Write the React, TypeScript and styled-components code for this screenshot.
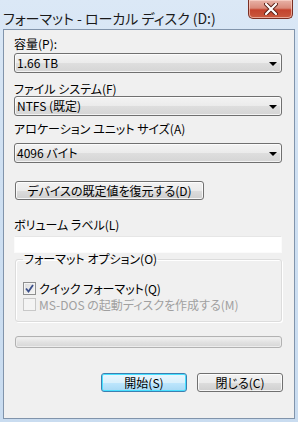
import React from "react";
import styled, { createGlobalStyle } from "styled-components";

const Global = createGlobalStyle`
  html, body { margin: 0; padding: 0; background: #cfe0f2; }
  body { font-family: "Noto Sans CJK JP", "Noto Sans", sans-serif; }
  * { box-sizing: border-box; }
`;

const Frame = styled.div`
  width: 298px;
  height: 422px;
  background: linear-gradient(180deg, #dbe8f6 0%, #cfe0f2 40%, #c9dcf0 100%);
  display: flex;
  flex-direction: column;
  overflow: hidden;
`;

const TitleBar = styled.div`
  height: 29px;
  display: flex;
  align-items: flex-start;
  justify-content: space-between;
  padding-left: 3px;
`;

const Title = styled.div`
  font-family: "Noto Sans CJK JP", sans-serif;
  font-feature-settings: "palt" 1;
  font-size: 14px;
  line-height: 18px;
  margin-top: 9px;
  color: #1a1a1a;
`;

const CloseButton = styled.div`
  width: 45px;
  height: 19px;
  margin-right: 5px;
  border: 1px solid #7a2f23;
  border-top: none;
  border-radius: 0 0 5px 5px;
  background: linear-gradient(180deg, #e8b3a8 0%, #d98a7a 45%, #c4432d 55%, #c95a3f 100%);
  box-shadow: inset 0 0 0 1px rgba(255, 220, 210, 0.6);
  display: flex;
  align-items: center;
  justify-content: center;
`;

const Client = styled.div`
  flex: 1;
  margin: 0 3px 3px 3px;
  border: 1px solid #8194ab;
  background: #f0f0f0;
  padding: 7px 12px 0 10px;
  display: flex;
  flex-direction: column;
  font-family: "Noto Sans CJK JP", sans-serif;
  font-feature-settings: "palt" 1;
  font-size: 12px;
  color: #000;
`;

const Label = styled.div<{ $mt: number }>`
  line-height: 14px;
  height: 14px;
  margin-top: ${(p) => p.$mt}px;
  white-space: nowrap;
`;

const Combo = styled.div<{ $mt: number }>`
  height: 20px;
  margin-top: ${(p) => p.$mt}px;
  border: 1px solid #707070;
  border-radius: 3px;
  background: linear-gradient(180deg, #f3f3f3 0%, #ebebeb 50%, #dedede 51%, #d5d5d5 100%);
  box-shadow: inset 0 0 0 1px rgba(255, 255, 255, 0.7);
  display: flex;
  align-items: center;
  justify-content: space-between;
  padding: 0 4px 0 2px;
  line-height: 16px;
`;

const Arrow = styled.span`
  width: 0;
  height: 0;
  border-left: 4px solid transparent;
  border-right: 4px solid transparent;
  border-top: 4px solid #000;
  margin-top: 2px;
`;

const Button = styled.div<{ $default?: boolean; $w: number }>`
  width: ${(p) => p.$w}px;
  height: 19px;
  border: 1px solid ${(p) => (p.$default ? "#3c7fb1" : "#707070")};
  border-radius: 3px;
  background: ${(p) =>
    p.$default
      ? "linear-gradient(180deg, #eaf6fd 0%, #d9f0fc 50%, #bee6fd 51%, #a7d9f5 100%)"
      : "linear-gradient(180deg, #f2f2f2 0%, #ebebeb 50%, #dddddd 51%, #cfcfcf 100%)"};
  box-shadow: inset 0 0 0 1px ${(p) => (p.$default ? "#48e0ff" : "rgba(255,255,255,0.8)")};
  display: flex;
  align-items: center;
  justify-content: center;
  line-height: 16px;
  white-space: nowrap;
`;

const RestoreRow = styled.div`
  margin-top: 18px;
  padding-left: 1px;
`;

const TextInput = styled.div`
  height: 17px;
  margin-top: 4px;
  background: #fff;
  border: 1px solid #fbfbfb;
  border-top-color: #e6e6e6;
`;

const Group = styled.fieldset`
  margin: -1px 0 0 1px;
  padding: 3px 0 0 7px;
  height: 70px;
  border: 1px solid #dcdcdc;
  border-radius: 3px;
  box-shadow: inset 1px 1px 0 #fff, 1px 1px 0 #fff;
  min-width: 0;
`;

const Legend = styled.legend`
  padding: 0 1px;
  margin-left: 0;
  line-height: 14px;
  height: 14px;
`;

const CheckRow = styled.div<{ $disabled?: boolean }>`
  display: flex;
  align-items: center;
  height: 16px;
  gap: 3px;
  color: ${(p) => (p.$disabled ? "#a0a0a0" : "#000")};
  white-space: nowrap;
`;

const Box = styled.span<{ $disabled?: boolean }>`
  width: 13px;
  height: 13px;
  border: 1px solid ${(p) => (p.$disabled ? "#c8c8c8" : "#8e8f8f")};
  background: ${(p) =>
    p.$disabled ? "#f4f4f4" : "linear-gradient(135deg, #dcdcdc 0%, #f6f6f6 100%)"};
  box-shadow: inset 0 0 0 1px #f4f4f4;
  display: flex;
  align-items: center;
  justify-content: center;
`;

const Checks = styled.div`
  display: flex;
  flex-direction: column;
  margin-top: 11px;
`;

const Progress = styled.div`
  height: 12px;
  margin: 14px 0 0 1px;
  border: 1px solid #b2b2b2;
  border-radius: 3px;
  background: linear-gradient(180deg, #f3f3f3 0%, #e2e2e2 50%, #d6d6d6 100%);
  box-shadow: inset 0 0 0 1px #ececec;
`;

const ButtonRow = styled.div`
  margin-top: 25px;
  display: flex;
  justify-content: flex-end;
  gap: 10px;
  margin-right: -1px;
`;

export default function App() {
  return (
    <>
      <Global />
      <Frame>
        <TitleBar>
          <Title>フォーマット - ローカル ディスク (D:)</Title>
          <CloseButton>
            <svg width="14" height="12" viewBox="0 0 14 12">
              <path
                d="M2 1 L12 11 M12 1 L2 11"
                stroke="#5a1e14"
                strokeWidth="4"
                strokeLinecap="round"
              />
              <path
                d="M2 1 L12 11 M12 1 L2 11"
                stroke="#ffffff"
                strokeWidth="2.2"
                strokeLinecap="round"
              />
            </svg>
          </CloseButton>
        </TitleBar>
        <Client>
          <Label $mt={0}>容量(P):</Label>
          <Combo $mt={2}>
            <span>1.66 TB</span>
            <Arrow />
          </Combo>
          <Label $mt={9}>ファイル システム(F)</Label>
          <Combo $mt={0}>
            <span>NTFS (既定)</span>
            <Arrow />
          </Combo>
          <Label $mt={6}>アロケーション ユニット サイズ(A)</Label>
          <Combo $mt={7}>
            <span>4096 バイト</span>
            <Arrow />
          </Combo>
          <RestoreRow>
            <Button $w={189}>デバイスの既定値を復元する(D)</Button>
          </RestoreRow>
          <Label $mt={18}>ボリューム ラベル(L)</Label>
          <TextInput />
          <Group>
            <Legend>フォーマット オプション(O)</Legend>
            <Checks>
              <CheckRow>
                <Box>
                  <svg width="9" height="9" viewBox="0 0 9 9">
                    <path
                      d="M1 4.5 L3.5 7.5 L8 1"
                      stroke="#3b4f8a"
                      strokeWidth="1.8"
                      fill="none"
                    />
                  </svg>
                </Box>
                <span>クイック フォーマット(Q)</span>
              </CheckRow>
              <CheckRow $disabled>
                <Box $disabled />
                <span>MS-DOS の起動ディスクを作成する(M)</span>
              </CheckRow>
            </Checks>
          </Group>
          <Progress />
          <ButtonRow>
            <Button $w={86} $default>
              開始(S)
            </Button>
            <Button $w={86}>閉じる(C)</Button>
          </ButtonRow>
        </Client>
      </Frame>
    </>
  );
}
